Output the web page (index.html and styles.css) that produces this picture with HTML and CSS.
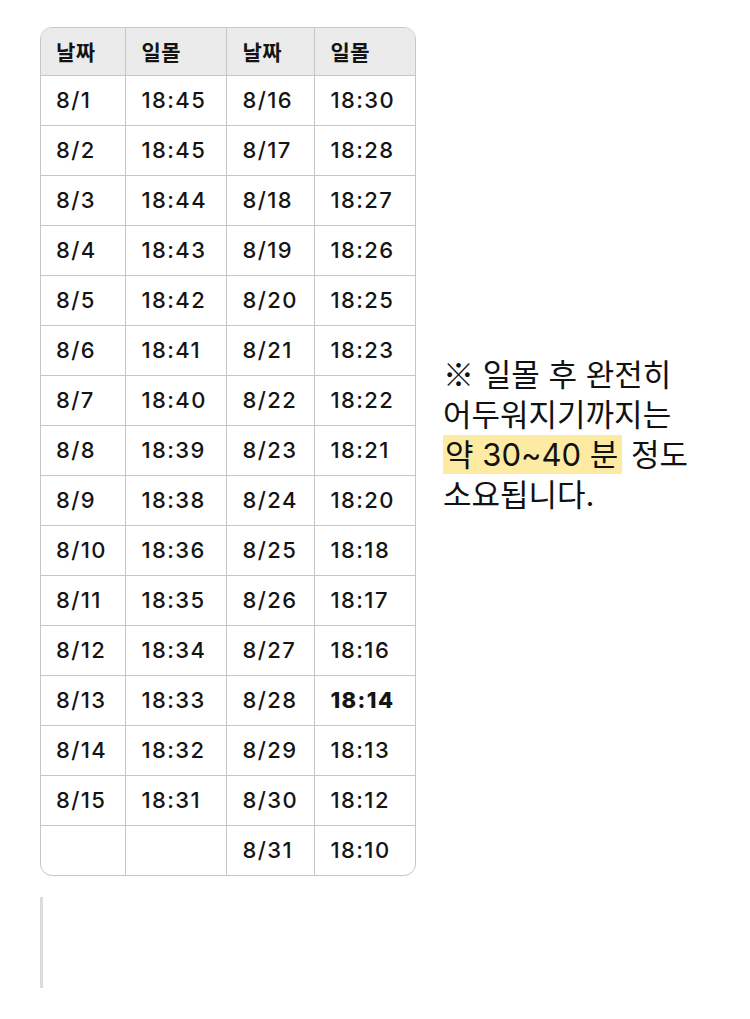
FILE: index.html
```html
<!DOCTYPE html>
<html lang="ko">
<head>
<meta charset="utf-8">
<link rel="stylesheet" href="styles.css">
</head>
<body>
<div class="page">
  <div class="row">
    <div class="table-wrap">
      <table class="sun">
        <colgroup>
          <col class="c1"><col class="c2"><col class="c3"><col class="c4">
        </colgroup>
        <thead>
          <tr><th>날짜</th><th>일몰</th><th>날짜</th><th>일몰</th></tr>
        </thead>
        <tbody>
          <tr><td>8/1</td><td>18:45</td><td>8/16</td><td>18:30</td></tr>
          <tr><td>8/2</td><td>18:45</td><td>8/17</td><td>18:28</td></tr>
          <tr><td>8/3</td><td>18:44</td><td>8/18</td><td>18:27</td></tr>
          <tr><td>8/4</td><td>18:43</td><td>8/19</td><td>18:26</td></tr>
          <tr><td>8/5</td><td>18:42</td><td>8/20</td><td>18:25</td></tr>
          <tr><td>8/6</td><td>18:41</td><td>8/21</td><td>18:23</td></tr>
          <tr><td>8/7</td><td>18:40</td><td>8/22</td><td>18:22</td></tr>
          <tr><td>8/8</td><td>18:39</td><td>8/23</td><td>18:21</td></tr>
          <tr><td>8/9</td><td>18:38</td><td>8/24</td><td>18:20</td></tr>
          <tr><td>8/10</td><td>18:36</td><td>8/25</td><td>18:18</td></tr>
          <tr><td>8/11</td><td>18:35</td><td>8/26</td><td>18:17</td></tr>
          <tr><td>8/12</td><td>18:34</td><td>8/27</td><td>18:16</td></tr>
          <tr><td>8/13</td><td>18:33</td><td>8/28</td><td class="bold">18:14</td></tr>
          <tr><td>8/14</td><td>18:32</td><td>8/29</td><td>18:13</td></tr>
          <tr><td>8/15</td><td>18:31</td><td>8/30</td><td>18:12</td></tr>
          <tr class="last"><td></td><td></td><td>8/31</td><td>18:10</td></tr>
        </tbody>
      </table>
    </div>
    <p class="note"><span class="mark">※</span> 일몰 후 완전히<br>어두워지기까지는<br><span class="hl">약 30~40 분</span> 정도<br>소요됩니다.</p>
  </div>
  <div class="quote"></div>
</div>
</body>
</html>
```
FILE: styles.css
```css
html, body {
  margin: 0;
  padding: 0;
  background: #fff;
}
.page {
  padding: 27px 0 0 40px;
  font-family: "Inter", "Noto Sans CJK KR", sans-serif;
  color: #141414;
}
.row {
  display: flex;
  align-items: flex-start;
}
.table-wrap {
  width: 374px;
  border: 1px solid #c6c6c6;
  border-radius: 12px;
  overflow: hidden;
  flex: none;
}
.sun {
  border-collapse: collapse;
  width: 374px;
  table-layout: fixed;
}
.c1 { width: 84px; }
.c2 { width: 101px; }
.c3 { width: 88px; }
.c4 { width: 101px; }
.sun th, .sun td {
  box-sizing: border-box;
  text-align: left;
  padding: 0 0 0 16px;
  border-right: 1px solid #c6c6c6;
  border-bottom: 1px solid #c6c6c6;
  white-space: nowrap;
  overflow: hidden;
}
.sun th:first-child, .sun td:first-child {
  padding-left: 15px;
}
.sun th:last-child, .sun td:last-child {
  border-right: none;
}
.sun tr.last td {
  border-bottom: none;
}
.sun th {
  background: #ebebeb;
  height: 47px;
  font-size: 21px;
  font-weight: 700;
  font-family: "Noto Sans CJK KR", sans-serif;
  letter-spacing: 0.5px;
}
.sun td {
  height: 50px;
  font-size: 22px;
  font-weight: 500;
  letter-spacing: 1.4px;
}
.sun td.bold {
  font-weight: 800;
}
.note {
  margin: 326px 0 0 27px;
  font-size: 31px;
  line-height: 40px;
  font-family: "Inter", "Noto Sans CJK KR", sans-serif;
  font-weight: 400;
  color: #111;
}
.mark {
  font-family: "Noto Sans CJK KR", sans-serif;
}
.hl {
  background: #fdeaa3;
  padding: 1px 4px 1px 2px;
}
.quote {
  margin-top: 21px;
  width: 3px;
  height: 91px;
  background: #dcdcdc;
}
```
